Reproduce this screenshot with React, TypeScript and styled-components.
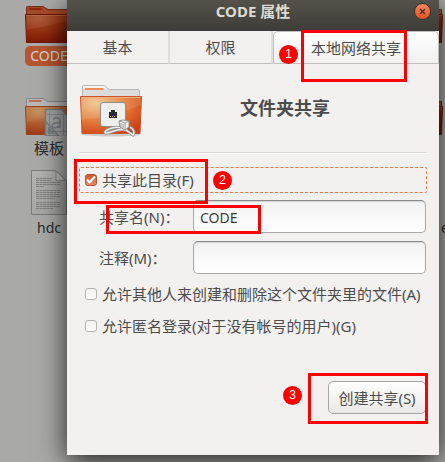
import React from 'react';
import styled, { createGlobalStyle, css } from 'styled-components';

const GlobalStyle = createGlobalStyle`
  * { box-sizing: border-box; }
  body {
    margin: 0;
    background: #a9a9a7;
    color: #4c4c4c;
    font-family: "Noto Sans", "Noto Sans CJK SC", sans-serif;
    font-size: 15px;
    line-height: 20px;
  }
  button, input { font: inherit; color: inherit; }
`;

const Desktop = styled.div`
  position: relative;
  min-height: 100vh;
  padding: 0 6px 7px 67px;
  overflow: hidden;
`;

const DesktopItem = styled.div<{ $x: number; $y: number }>`
  position: absolute;
  left: ${p => p.$x}px;
  top: ${p => p.$y}px;
  width: 48px;
  display: flex;
  flex-direction: column;
  align-items: center;
  gap: 2px;
  color: #2b2b2b;
  white-space: nowrap;
  svg { display: block; flex: none; }
`;

const ItemLabel = styled.span<{ $selected?: boolean; $latin?: boolean }>`
  padding: 0 5px;
  font-size: ${p => (p.$latin ? 14 : 15)}px;
  ${p => p.$selected && css`
    border-radius: 5px;
    background: #b65532;
    color: #d8d4cf;
  `}
`;

const Dialog = styled.section`
  position: relative;
  background: #f2f1f0;
  box-shadow: 0 6px 26px rgba(0, 0, 0, 0.82);
`;

const TitleBar = styled.header`
  display: grid;
  grid-template-columns: 32px 1fr 32px;
  align-items: center;
  height: 31px;
  padding-bottom: 9px;
  background: linear-gradient(#54524a, #3d3c38);
`;

const Title = styled.h1`
  grid-column: 2;
  margin: 0;
  color: #dfdbd2;
  font-size: 15px;
  font-weight: 700;
  line-height: 20px;
  text-align: center;
`;

const CloseButton = styled.button`
  display: flex;
  align-items: center;
  justify-content: center;
  width: 17px;
  height: 17px;
  margin-left: 7px;
  padding: 0;
  border: 1px solid #33322e;
  border-radius: 50%;
  background: linear-gradient(#f58763, #e4511f);
`;

const Tabs = styled.div`
  display: grid;
  grid-template-columns: 103fr 103fr 166fr;
  height: 33px;
`;

const Tab = styled.button<{ $active?: boolean }>`
  padding: 0;
  border: 0;
  border-right: 2px solid #dfdedc;
  border-bottom: 1px solid #c0bfbd;
  background: #f2f1f0;
  ${p => p.$active && css`
    border: 1px solid #c0bfbd;
    border-radius: 5px 5px 0 0;
    background: linear-gradient(#ffffff, #f2f1f0);
  `}
`;

const Panel = styled.form`
  padding: 19px 12px 41px;
`;

const Heading = styled.div`
  display: grid;
  grid-template-columns: 64px 1fr;
  align-items: center;
  height: 56px;
  svg { display: block; }
`;

const HeadingText = styled.h2`
  margin: 0;
  padding-bottom: 6px;
  font-size: 18px;
  font-weight: 700;
  line-height: 24px;
  text-align: center;
`;

const Rule = styled.hr`
  height: 2px;
  margin: 13px 0;
  border: 0;
  border-top: 1px solid #d9d8d6;
  background: #fafafa;
`;

const CheckRow = styled.label<{ $focused?: boolean }>`
  display: flex;
  align-items: center;
  gap: 5px;
  height: ${p => (p.$focused ? 26 : 32)}px;
  padding: 0 5px;
  border: 1px dashed ${p => (p.$focused ? '#f07746' : 'transparent')};
  border-radius: 2px;
  white-space: nowrap;
`;

const checkMark = `url("data:image/svg+xml,%3Csvg xmlns='http://www.w3.org/2000/svg' viewBox='0 0 12 12'%3E%3Cpath d='M2 5.5 4.5 8.5 10 2.5' fill='none' stroke='white' stroke-width='2'/%3E%3C/svg%3E")`;

const Checkbox = styled.input`
  appearance: none;
  flex: none;
  width: 12px;
  height: 12px;
  margin: 0;
  border: 1px solid #b5b4b2;
  border-radius: 3px;
  background: linear-gradient(#f1f1f1, #ffffff);
  &:checked {
    border-color: #b4532f;
    background: ${checkMark} center / 12px 12px no-repeat, linear-gradient(#cf552c, #e88a65);
  }
`;

const Fields = styled.div`
  display: grid;
  grid-template-columns: 94px 1fr;
  row-gap: 8px;
  align-items: center;
  padding: 7px 1px 4px 20px;
`;

const FieldLabel = styled.label`
  white-space: nowrap;
`;

const Entry = styled.input`
  width: 100%;
  min-width: 0;
  height: 33px;
  padding: 2px 6px 0;
  border: 1px solid #a9a9a9;
  border-top-color: #8a8b8c;
  border-radius: 5px;
  background: linear-gradient(#f3f3f3, #ffffff);
  box-shadow: inset 0 1px 1px #d4d4d4;
  color: #3c3c3c;
  font-size: 14px;
  outline: 0;
`;

const Actions = styled.div`
  display: flex;
  justify-content: flex-end;
  padding: 39px 1px 0;
`;

const ActionButton = styled.button`
  min-width: 98px;
  height: 33px;
  padding: 0 9px;
  border: 1px solid #a8a7a5;
  border-radius: 5px;
  background: linear-gradient(#fefefe, #eae9e8);
  white-space: nowrap;
`;

const Marker = styled.div<{ $x: number; $y: number; $w: number; $h: number }>`
  position: absolute;
  left: ${p => p.$x}px;
  top: ${p => p.$y}px;
  width: ${p => p.$w}px;
  height: ${p => p.$h}px;
  border: 3px solid #ff0000;
  pointer-events: none;
`;

const Step = styled.span<{ $x: number; $y: number }>`
  position: absolute;
  left: ${p => p.$x}px;
  top: ${p => p.$y}px;
  width: 19px;
  height: 19px;
  border-radius: 50%;
  background: #ff0000;
  color: #ffffff;
  font: 12px/18px "Liberation Sans", sans-serif;
  text-align: center;
  pointer-events: none;
`;

type FolderKind = 'plain' | 'template';

const FolderIcon = ({ kind }: { kind: FolderKind }) => {
  const plain = kind === 'plain';
  return (
    <svg width="48" height="38" viewBox="0 0 48 38" aria-hidden="true">
      <defs>
        <radialGradient id={`front-${kind}`} cx="0.28" cy="0.15" r="0.9">
          <stop offset="0" stopColor={plain ? '#a9552f' : '#c29157'} />
          <stop offset="0.5" stopColor={plain ? '#963010' : '#b25d30'} />
          <stop offset="1" stopColor={plain ? '#7c1705' : '#9b3513'} />
        </radialGradient>
      </defs>
      <path
        d="M1.5 10V1.5Q1.5.5 2.5.5H18l5 3h23.500V10Z"
        fill={plain ? '#a34a28' : '#b8b8b8'}
        stroke={plain ? '#712b17' : '#858585'}
      />
      <path d="M4 3h12.500" stroke={plain ? '#8f260d' : '#b87450'} strokeWidth="2" />
      <path d="M.5 8.500h47L46.500 36.500h-45Z" fill={`url(#front-${kind})`} stroke={plain ? '#6d1606' : '#97441f'} />
      <path d="M1 9.500h46" stroke="#c2714a" strokeOpacity="0.5" />
      <path d="M1 24Q20 21 47 13V9H1Z" fill="#ffffff" opacity="0.06" />
      {!plain && (
        <g fill="none" stroke="#777c80">
          <path d="M20.500 11.500h16l6 6v21h-22Z" fill="#a3a5a5" strokeWidth="1.500" />
          <path d="M24.500 13v24M38.500 17v20M22 16.500h18M22 33.500h20" strokeWidth="1" opacity="0.7" />
          <path d="M28 21q5-3 7 1v8M35 25q-8-1-8 3 1 4 8 0" strokeWidth="1.500" />
          <path d="M20.500 23.500v14h13ZM23.500 30v5h5Z" strokeWidth="1.500" />
        </g>
      )}
    </svg>
  );
};

const DocumentIcon = () => (
  <svg width="36" height="46" viewBox="0 0 36 46" aria-hidden="true">
    <defs>
      <linearGradient id="sheet" x2="1" y2="1">
        <stop stopColor="#b4b4b3" />
        <stop offset="1" stopColor="#9d9d9b" />
      </linearGradient>
    </defs>
    <path d="M.5.500H25L35.500 11V44.500H.5Z" fill="url(#sheet)" stroke="#7b7b79" />
    <path d="M25 1v9.500h10Z" fill="#bcbcba" stroke="#858583" />
    <g stroke="#7f7f7d" strokeDasharray="3 0.500">
      <path d="M5 8.500h16M5 10.500h15M5 12.500h25M5 14.500h24M5 16.500h8M5 20.500h24M5 22.500h25M5 24.500h23M5 26.500h25M5 28.500h19M5 32.500h25M5 34.500h24M5 36.500h24M5 38.500h17" />
    </g>
  </svg>
);

const ShareIcon = () => (
  <svg width="64" height="54" viewBox="0 0 64 54" aria-hidden="true">
    <defs>
      <radialGradient id="share-front" cx="0.25" cy="0.18" r="0.95">
        <stop offset="0" stopColor="#efc58b" />
        <stop offset="0.5" stopColor="#e37d3c" />
        <stop offset="1" stopColor="#cf3d12" />
      </radialGradient>
      <linearGradient id="share-back" x2="0" y2="1">
        <stop stopColor="#ffffff" />
        <stop offset="0.3" stopColor="#dcdcdc" />
      </linearGradient>
    </defs>
    <ellipse cx="32" cy="50" rx="30" ry="2.500" fill="#777777" opacity="0.3" />
    <path d="M3.500 18V2.500Q3.500 1.500 4.500 1.500H25.500L30 5.500H59Q60.500 5.500 60.500 7V18Z" fill="url(#share-back)" stroke="#b6b6b6" />
    <path d="M6 5h18.500" stroke="#eb8d5d" strokeWidth="2" />
    <path d="M1.500 12.500H62.500L61 49.500H3Z" fill="url(#share-front)" stroke="#c95428" />
    <path d="M2.500 13.500H61.500" stroke="#f2a46c" />
    <path d="M2 36Q32 34 62 21V13H2Z" fill="#ffffff" opacity="0.1" />
    <rect x="21.500" y="18.500" width="25" height="24" rx="2.500" fill="#eeeeec" stroke="#8c8e8b" />
    <path d="M30 34v-6h2v-2h4v2h2v6Z" fill="#292d2e" />
    <path d="M31 32.500h6" stroke="#d5ad2c" strokeDasharray="1 1" />
    <path d="M45 46C38 40 27 46 26 48C26 52 39 43 47 46L54 51Q57 47 51 43" fill="none" stroke="#8e908c" strokeWidth="3" />
    <path d="M45 46C38 40 27 46 26 48C26 52 39 43 47 46L54 51Q57 47 51 43" fill="none" stroke="#eeeeec" strokeWidth="1.500" />
    <path d="M40 37l4-1 6 1v6l-4 3-5-3Z" fill="#f1f1ef" stroke="#8e908c" />
    <path d="M40 37l6 2v7M46 39l4-2M42 39v4M44 40v4" fill="none" stroke="#a0a29e" />
  </svg>
);

export default function App() {
  return (
    <>
      <GlobalStyle />
      <Desktop>
        <DesktopItem $x={25} $y={6}>
          <FolderIcon kind="plain" />
          <ItemLabel $selected $latin>CODE</ItemLabel>
        </DesktopItem>
        <DesktopItem $x={25} $y={98}>
          <FolderIcon kind="template" />
          <ItemLabel>模板</ItemLabel>
        </DesktopItem>
        <DesktopItem $x={25} $y={170}>
          <DocumentIcon />
          <ItemLabel $latin>hdc</ItemLabel>
        </DesktopItem>
        <DesktopItem $x={395} $y={6}>
          <FolderIcon kind="plain" />
        </DesktopItem>
        <DesktopItem $x={395} $y={98}>
          <FolderIcon kind="plain" />
        </DesktopItem>
        <DesktopItem $x={421} $y={218}>
          <ItemLabel $latin>e</ItemLabel>
        </DesktopItem>

        <Dialog aria-labelledby="dialog-title">
          <TitleBar>
            <Title id="dialog-title">CODE 属性</Title>
            <CloseButton type="button" aria-label="关闭">
              <svg width="7" height="7" viewBox="0 0 7 7" aria-hidden="true">
                <path d="M1 1l5 5M6 1L1 6" stroke="#4c3022" strokeWidth="1.300" />
              </svg>
            </CloseButton>
          </TitleBar>
          <Tabs role="tablist">
            <Tab type="button" role="tab" aria-selected={false}>基本</Tab>
            <Tab type="button" role="tab" aria-selected={false}>权限</Tab>
            <Tab type="button" role="tab" aria-selected $active>本地网络共享</Tab>
          </Tabs>
          <Panel onSubmit={e => e.preventDefault()}>
            <Heading>
              <ShareIcon />
              <HeadingText>文件夹共享</HeadingText>
            </Heading>
            <Rule />
            <CheckRow $focused>
              <Checkbox type="checkbox" defaultChecked />
              共享此目录(F)
            </CheckRow>
            <Fields>
              <FieldLabel htmlFor="share-name">共享名(N)：</FieldLabel>
              <Entry id="share-name" type="text" defaultValue="CODE" />
              <FieldLabel htmlFor="comment">注释(M)：</FieldLabel>
              <Entry id="comment" type="text" />
            </Fields>
            <CheckRow>
              <Checkbox type="checkbox" />
              允许其他人来创建和删除这个文件夹里的文件(A)
            </CheckRow>
            <CheckRow>
              <Checkbox type="checkbox" />
              允许匿名登录(对于没有帐号的用户)(G)
            </CheckRow>
            <Actions>
              <ActionButton type="submit">创建共享(S)</ActionButton>
            </Actions>
          </Panel>
        </Dialog>

        <Marker $x={301} $y={30} $w={106} $h={52} />
        <Marker $x={74} $y={159} $w={134} $h={45} />
        <Marker $x={106} $y={205} $w={155} $h={29} />
        <Marker $x={308} $y={373} $w={120} $h={51} />
        <Step $x={279} $y={45}>1</Step>
        <Step $x={213} $y={171}>2</Step>
        <Step $x={283} $y={386}>3</Step>
      </Desktop>
    </>
  );
}
